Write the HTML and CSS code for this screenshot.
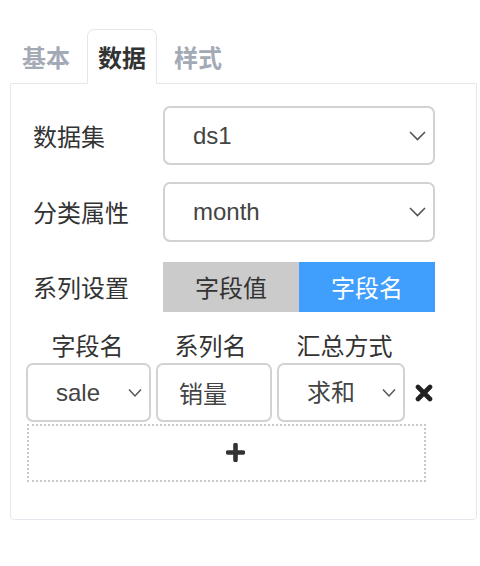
FILE: index.html
```html
<!DOCTYPE html>
<html lang="zh-CN">
<head>
<meta charset="utf-8">
<link rel="stylesheet" href="styles.css">
</head>
<body>
<div class="wrap">
  <div class="tabs">
    <div class="tab">基本</div>
    <div class="tab active">数据</div>
    <div class="tab">样式</div>
  </div>
  <div class="panel">
    <div class="form-row row-ds">
      <div class="label">数据集</div>
      <div class="select big"><span class="val">ds1</span>
        <svg class="chev" width="17" height="10" viewBox="0 0 17 10"><path d="M1 1 L8.5 8.5 L16 1" fill="none" stroke="#555" stroke-width="1.6"/></svg>
      </div>
    </div>
    <div class="form-row row-cat">
      <div class="label">分类属性</div>
      <div class="select big"><span class="val">month</span>
        <svg class="chev" width="17" height="10" viewBox="0 0 17 10"><path d="M1 1 L8.5 8.5 L16 1" fill="none" stroke="#555" stroke-width="1.6"/></svg>
      </div>
    </div>
    <div class="form-row row-series">
      <div class="label">系列设置</div>
      <div class="segmented">
        <div class="seg">字段值</div>
        <div class="seg on">字段名</div>
      </div>
    </div>
    <div class="series">
      <div class="heads">
        <div class="head">字段名</div>
        <div class="head">系列名</div>
        <div class="head">汇总方式</div>
      </div>
      <div class="item">
        <div class="select small s-field"><span class="val">sale</span>
          <svg class="chev" width="14" height="10" viewBox="0 0 14 10"><path d="M1 1.5 L7 8 L13 1.5" fill="none" stroke="#555" stroke-width="1.5"/></svg>
        </div>
        <div class="input">销量</div>
        <div class="select small s-agg"><span class="val">求和</span>
          <svg class="chev" width="14" height="10" viewBox="0 0 14 10"><path d="M1 1.5 L7 8 L13 1.5" fill="none" stroke="#555" stroke-width="1.5"/></svg>
        </div>
        <svg class="remove" width="18" height="18" viewBox="0 0 18 18"><path d="M3 3 L15 15 M15 3 L3 15" stroke="#222" stroke-width="4.6" stroke-linecap="round"/></svg>
      </div>
      <div class="add">
        <svg width="19" height="19" viewBox="0 0 19 19"><path d="M9.5 2 V17 M2 9.5 H17" stroke="#333" stroke-width="4.6" stroke-linecap="round"/></svg>
      </div>
    </div>
  </div>
</div>
</body>
</html>
```
FILE: styles.css
```css
* { box-sizing: border-box; }
html, body { margin: 0; background: #fff; }
body {
  font-family: "Liberation Sans", "Noto Sans CJK SC", sans-serif;
  font-size: 24px;
  color: #333;
}
.wrap {
  padding: 29px 3px 0 10px;
  width: 480px;
}
.tabs {
  display: flex;
  gap: 6px;
  padding-left: 1px;
  margin-bottom: -1px;
}
.tab {
  width: 70px;
  height: 55px;
  border: 1px solid transparent;
  border-bottom: none;
  border-radius: 7px 7px 0 0;
  text-align: center;
  line-height: 54px;
  font-weight: bold;
  color: #a3aab6;
  font-family: "Noto Sans CJK SC", sans-serif;
}
.tab.active {
  color: #333;
  background: #fff;
  border-color: #e4e7ed;
  position: relative;
  z-index: 1;
}
.panel {
  border: 1px solid #e4e7ed;
  border-radius: 0 0 4px 4px;
  padding: 22px 41px 37px 22px;
  height: 437px;
}
.form-row {
  display: grid;
  grid-template-columns: 130px 1fr;
  align-items: center;
}
.row-ds { margin-bottom: 17px; }
.row-cat { margin-bottom: 20px; }
.label {
  line-height: 30px;
  color: #333;
  font-family: "Noto Sans CJK SC", sans-serif;
}
.select {
  display: flex;
  align-items: center;
  justify-content: space-between;
  border: 2px solid #d2d2d2;
  border-radius: 7px;
  background: #fff;
  color: #444;
  padding: 0 7px 0 28px;
}
.select.big { height: 59px; }
.row-cat .select.big { height: 60px; }
.select .val { line-height: 30px; }
.segmented {
  display: grid;
  grid-template-columns: 1fr 1fr;
  height: 50px;
}
.seg {
  background: #cbcbcb;
  color: #333;
  text-align: center;
  line-height: 50px;
  font-family: "Noto Sans CJK SC", sans-serif;
}
.seg.on {
  background: #409efc;
  color: #fff;
}
.series {
  margin-left: -7px;
  margin-top: 18px;
}
.heads {
  display: grid;
  grid-template-columns: 123px 123px 145px;
  height: 33px;
}
.head {
  text-align: center;
  line-height: 30px;
  font-family: "Noto Sans CJK SC", sans-serif;
}
.item {
  display: flex;
  align-items: center;
  height: 59px;
}
.select.small {
  height: 59px;
  padding: 0 7px 0 28px;
}
.s-field { width: 125px; margin-right: 5px; }
.s-agg { width: 128px; margin-right: 10px; padding-left: 29px; }
.input {
  width: 116px;
  height: 59px;
  margin-right: 5px;
  border: 2px solid #d2d2d2;
  border-radius: 7px;
  color: #444;
  padding-left: 21px;
  line-height: 55px;
  font-family: "Noto Sans CJK SC", sans-serif;
}
.remove { display: block; }
.add {
  margin-top: 2px;
  margin-left: 1px;
  width: 399px;
  height: 58px;
  border: 2px dotted #c8c8c8;
  display: flex;
  align-items: center;
  justify-content: center;
  padding-left: 18px;
  padding-bottom: 2px;
}
.add svg { display: block; }
```
